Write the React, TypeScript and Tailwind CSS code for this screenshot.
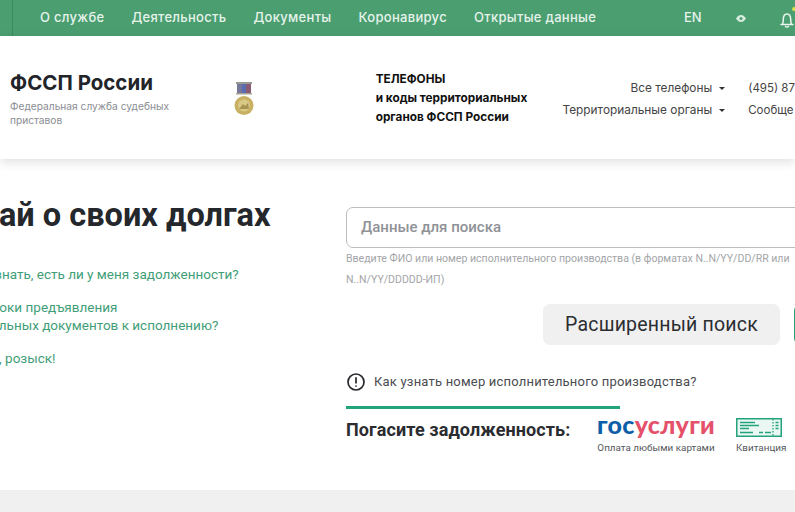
const navItems = ["О службе", "Деятельность", "Документы", "Коронавирус", "Открытые данные"];

const BellIcon = () => (
  <svg width="16" height="24" viewBox="0 0 16 24" fill="none" stroke="#eaf5ee" strokeWidth="1.5" strokeLinecap="round">
    <path d="M2 18.5h12M3.5 18.5c.6-1.4.8-3 .8-5 0-3.2 1.400-5.500 3.700-5.500s3.700 2.300 3.700 5.500c0 2 .2 3.600.8 5" />
    <path d="M6.500 20.500c.4.800 2.600.800 3 0" />
  </svg>
);

const EyeIcon = () => (
  <svg width="10" height="7" viewBox="0 0 10 7" className="block">
    <path d="M0 3.500C1.500 1 3.200 0 5 0s3.500 1 5 3.500C8.500 6 6.800 7 5 7S1.500 6 0 3.500z" fill="#d8ece0" />
    <circle cx="5" cy="3.500" r="1.500" fill="#4a9e70" />
  </svg>
);

const Caret = () => <span className="ml-[7px] inline-block h-0 w-0 border-x-[3px] border-t-[3px] border-x-transparent border-t-[#333] align-middle" />;

const Medal = () => (
  <svg width="20" height="34" viewBox="0 0 20 34" className="block">
    <rect x="2" y="0" width="16" height="2" fill="#9a9a94" />
    <rect x="3" y="2" width="5" height="9" fill="#77779a" />
    <rect x="8" y="2" width="4" height="9" fill="#5a6cb0" />
    <rect x="12" y="2" width="5" height="9" fill="#8a5a72" />
    <rect x="2" y="11" width="16" height="1.500" fill="#a8a490" />
    <circle cx="10" cy="23.500" r="9.500" fill="#c9b164" />
    <circle cx="10" cy="23.500" r="6" fill="#d8c987" />
    <path d="M5 27l4-5 2 2 3-3 1 6z" fill="#a89350" />
  </svg>
);

const ReceiptIcon = () => (
  <svg width="46" height="19" viewBox="0 0 46 19" fill="none" className="block">
    <rect x=".75" y=".75" width="44.500" height="17.500" fill="#eaf7f2" stroke="#23a37c" strokeWidth="1.500" />
    <g stroke="#23a37c" strokeWidth="1.300">
      <path d="M4 4.500h15M4 7.500h19M4 10.500h9M4 14.500h13M23 14.500h4M29 14.500h6" />
      <path d="M37 1v17" strokeDasharray="1.500 1.500" />
      <path d="M39.500 4.500h3M39.500 7.500h3M39.500 10.500h3" />
    </g>
  </svg>
);

export default function App() {
  return (
    <div className="flex h-[512px] w-[795px] flex-col overflow-hidden bg-white font-['Inter',sans-serif]">
      {/* top nav */}
      <div className="flex h-[36px] shrink-0 items-center bg-[#4a9e70] text-[13px] font-medium text-[#e6f3eb]">
        <div className="h-full w-[13px] border-r border-[#3d8a60]" />
        <div className="ml-[27px] flex w-[556px] gap-[27px] whitespace-nowrap tracking-[0.3px]">
          {navItems.map((item) => (
            <span key={item}>{item}</span>
          ))}
        </div>
        <span className="ml-[88px] text-[13px]">EN</span>
        <span className="ml-[34px]">
          <EyeIcon />
        </span>
        <span className="relative ml-[33px]">
          <BellIcon />
          <span className="absolute right-[-1px] top-[1px] h-[4px] w-[4px] rounded-full bg-[#d6e04a]" />
        </span>
      </div>

      {/* header */}
      <div className="relative z-10 flex h-[123px] shrink-0 items-start shadow-[0_3px_10px_rgba(0,0,0,0.13)]">
        <div className="w-[234px] pl-[10px] pt-[35px]">
          <div className="text-[20.500px] font-bold leading-[24px] text-[#22242a]">ФССП России</div>
          <div className="mt-[4px] w-[175px] text-[10.200px] leading-[14px] text-[#8a8d92]">Федеральная служба судебных приставов</div>
        </div>
        <div className="pt-[46px]">
          <Medal />
        </div>
        <div className="ml-[122px] w-[170px] pt-[34px] text-[11.800px] font-bold leading-[19px] text-[#111]">
          ТЕЛЕФОНЫ
          <br />и коды территориальных
          <br />органов ФССП России
        </div>
        <div className="ml-[-19px] w-[199px] pt-[41px] text-right text-[11.850px] leading-[22px] text-[#444]">
          <div>
            Все телефоны
            <Caret />
          </div>
          <div>
            Территориальные органы
            <Caret />
          </div>
        </div>
        <div className="ml-[23px] whitespace-nowrap pt-[41px] text-[11.500px] leading-[22px] text-[#444]">
          <div>(495) 87</div>
          <div>Сообще</div>
        </div>
      </div>

      {/* main */}
      <div className="flex flex-1 font-['Roboto',sans-serif]">
        <div className="ml-[-56px] w-[402px] shrink-0 pt-[36px]">
          <h1 className="whitespace-nowrap text-[32.500px] font-bold leading-[40px] text-[#24272c]">Узнай о своих долгах</h1>
          <div className="mt-[30px] text-[13.500px] leading-[18px] text-[#3f9e78]">
            <p className="ml-[18px] whitespace-nowrap">Как узнать, есть ли у меня задолженности?</p>
            <p className="ml-[39px] mt-[15px] whitespace-nowrap">Сроки предъявления</p>
            <p className="ml-[-12px] whitespace-nowrap">исполнительных документов к исполнению?</p>
            <p className="ml-[-9px] mt-[15px] whitespace-nowrap">Внимание, розыск!</p>
          </div>
        </div>
        <div className="w-[560px] shrink-0 pt-[48px]">
          <div className="flex h-[41px] items-center rounded-[7px] border border-[#bdbdbd] pl-[14px] text-[15px] font-medium text-[#8f9296]">Данные для поиска</div>
          <div className="w-[465px] text-[10.550px] leading-[21px] text-[#a3a5a8]">
            Введите ФИО или номер исполнительного производства (в форматах N..N/YY/DD/RR или N..N/YY/DDDDD-ИП)
          </div>
          <div className="mt-[14px] flex">
            <div className="ml-[197px] flex h-[41px] w-[237px] items-center justify-center rounded-[7px] bg-[#f0f0f0] text-[19.500px] tracking-[0.2px] text-[#2b2d31]">Расширенный поиск</div>
            <div className="ml-[14px] h-[41px] w-[40px] rounded-[7px] bg-[#23a37c]" />
          </div>
          <div className="mt-[27px] flex h-[20px] items-center pl-[1px]">
            <svg width="18" height="18" viewBox="0 0 18 18" fill="none" stroke="#26282c" strokeWidth="1.700" strokeLinecap="round">
              <circle cx="9" cy="9" r="8" />
              <path d="M9 4.800v5M9 13v.1" />
            </svg>
            <span className="ml-[9px] whitespace-nowrap text-[13px] tracking-[0.2px] text-[#4a4c50]">Как узнать номер исполнительного производства?</span>
          </div>
          <div className="mt-[14px] h-[3px] w-[274px] bg-[#23a37c]" />
          <div className="flex items-start">
            <div className="w-[250px] whitespace-nowrap pt-[9px] text-[18px] font-bold leading-[24px] tracking-[0.1px] text-[#2a2c30]">Погасите задолженность:</div>
            <div className="flex w-[120px] flex-col items-center pt-[2px]">
              <div className="whitespace-nowrap font-['Lato',sans-serif] text-[25px] font-black leading-[26px] tracking-[0.3px]">
                <span className="text-[#0d5ea8]">гос</span>
                <span className="text-[#e5506b]">услуги</span>
              </div>
              <div className="mt-[4px] whitespace-nowrap text-[9.900px] leading-[14px] text-[#55585c]">Оплата любыми картами</div>
            </div>
            <div className="ml-[20px] flex flex-col pt-[9px]">
              <ReceiptIcon />
              <div className="mt-[4px] whitespace-nowrap text-[9.900px] leading-[14px] text-[#55585c]">Квитанция</div>
            </div>
          </div>
        </div>
      </div>

      {/* footer strip */}
      <div className="h-[22px] shrink-0 bg-[#f0f0f0]" />
    </div>
  );
}
